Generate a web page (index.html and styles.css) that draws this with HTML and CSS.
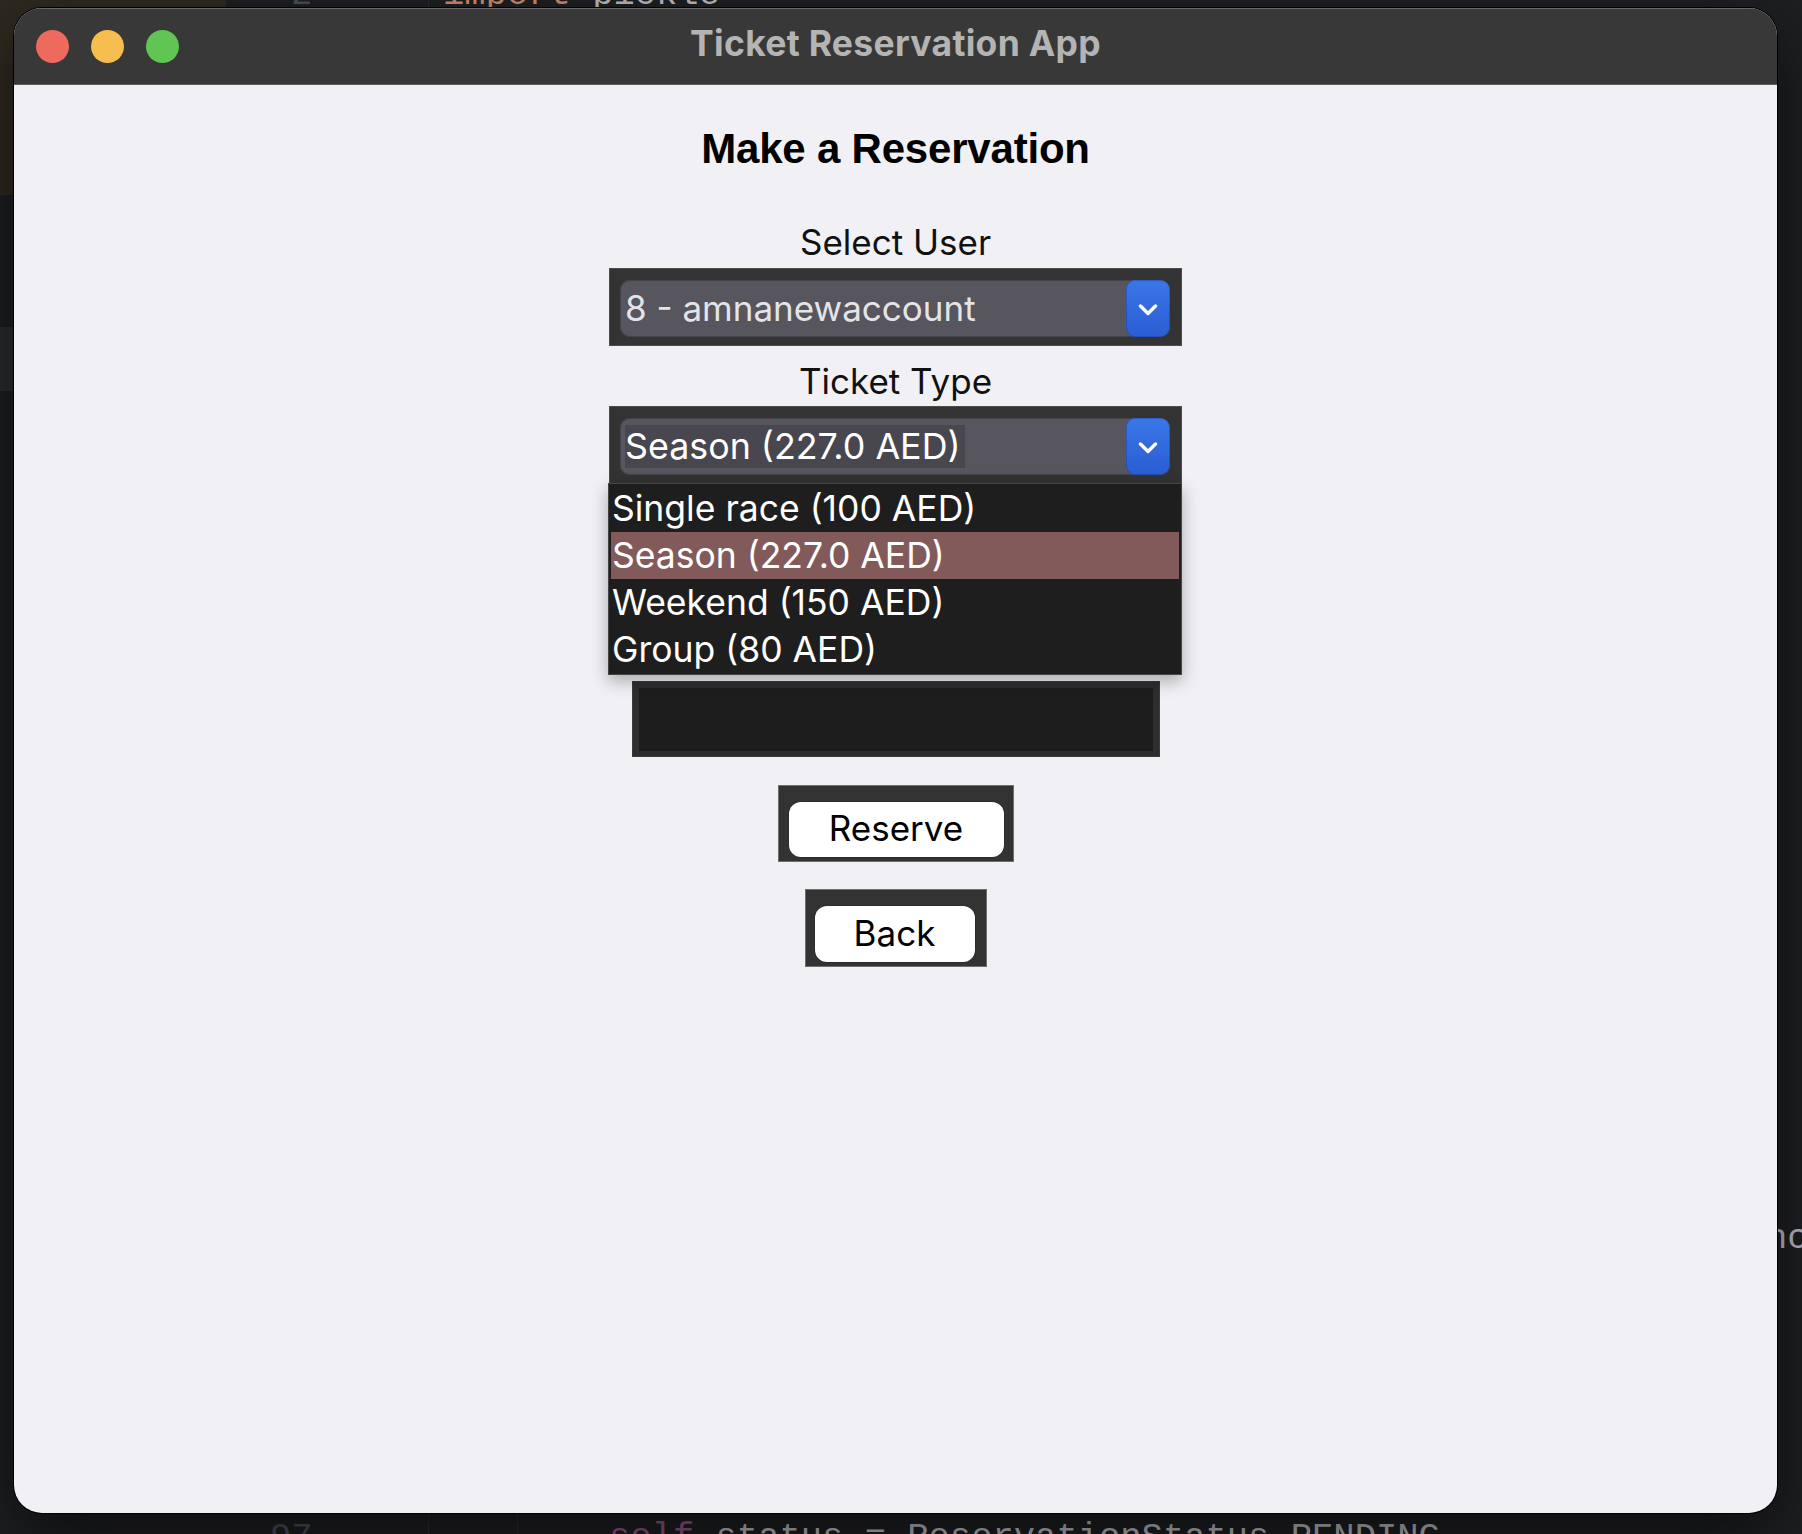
FILE: index.html
```html
<!DOCTYPE html>
<html lang="en">
<head>
<meta charset="utf-8">
<title>Ticket Reservation App</title>
<link rel="stylesheet" href="styles.css">
</head>
<body>
<div class="desktop">
  <div class="sidebar"></div>
  <div class="gutter-line gl1"></div>
  <div class="gutter-line gl2"></div>
  <div class="code code-top"><span class="ln">2</span><span class="kw">import</span> <span class="id">pickle</span></div>
  <div class="code code-right"><span class="id">nc</span></div>
  <div class="code code-bottom"><span class="ln">97</span><span class="self">self</span><span class="id">.status = ReservationStatus.PENDING</span></div>

  <div class="window">
    <header class="titlebar">
      <div class="lights">
        <span class="light red"></span>
        <span class="light yellow"></span>
        <span class="light green"></span>
      </div>
      <div class="title">Ticket Reservation App</div>
      <div></div>
    </header>

    <main class="content">
      <h1 class="heading">Make a Reservation</h1>

      <div class="label label-first">Select User</div>
      <div class="frame combo-frame frame-first">
        <div class="combo">
          <span class="combo-text">8 - amnanewaccount</span>
          <span class="combo-btn"><svg width="20" height="12" viewBox="0 0 20 12"><polyline points="2.5,2 10,9.5 17.5,2" fill="none" stroke="#fff" stroke-width="3.4" stroke-linecap="round" stroke-linejoin="round"/></svg></span>
        </div>
      </div>

      <div class="label label-second">Ticket Type</div>
      <div class="ticket-field">
        <div class="frame combo-frame">
          <div class="combo">
            <span class="combo-text"><span class="sel">Season (227.0 AED)</span></span>
            <span class="combo-btn"><svg width="20" height="12" viewBox="0 0 20 12"><polyline points="2.5,2 10,9.5 17.5,2" fill="none" stroke="#fff" stroke-width="3.4" stroke-linecap="round" stroke-linejoin="round"/></svg></span>
          </div>
        </div>
        <ul class="listbox">
          <li class="option">Single race (100 AED)</li>
          <li class="option selected">Season (227.0 AED)</li>
          <li class="option">Weekend (150 AED)</li>
          <li class="option">Group (80 AED)</li>
        </ul>
      </div>

      <div class="frame entry-frame"><div class="entry"></div></div>

      <div class="frame btn-frame reserve-frame"><button class="btn reserve">Reserve</button></div>
      <div class="frame btn-frame back-frame"><button class="btn back">Back</button></div>
    </main>
  </div>
</div>
</body>
</html>
```

FILE: styles.css
```css
* { box-sizing: border-box; }
html, body { margin: 0; padding: 0; }
body {
  width: 1802px;
  height: 1534px;
  overflow: hidden;
  background: #1e1f22;
}
.desktop {
  position: relative;
  width: 1802px;
  height: 1534px;
  overflow: hidden;
  background: #1e1f22;
}
.sidebar {
  position: absolute;
  left: 0; top: 0;
  width: 226px; height: 1534px;
  background: linear-gradient(to bottom, #2f2a20 0, #2f2a20 195px, #1e1f22 195px, #1e1f22 327px, #2b2d30 327px, #2b2d30 391px, #1e1f22 391px);
}
.gutter-line {
  position: absolute;
  top: 0; bottom: 0;
  width: 1px;
  background: #2b2d30;
}
.gl1 { left: 428px; }
.gl2 { left: 517px; }
.code {
  position: absolute;
  font-family: "Liberation Mono", "DejaVu Sans Mono", monospace;
  font-size: 35.5px;
  line-height: 40px;
  white-space: pre;
  color: #bcbec4;
}
.code .ln { color: #4b5059; display: inline-block; }
.code .kw { color: #cf8e6d; }
.code .self { color: #94558d; }
.code-top { top: -25px; left: 291px; }
.code-top .ln { width: 152px; }
.code-bottom { top: 1518px; left: 270px; }
.code-bottom .ln { width: 339px; }
.code-right { top: 1219px; left: 1766px; }

.window {
  position: absolute;
  left: 14px; top: 8px;
  width: 1763px; height: 1505px;
  border-radius: 28px;
  overflow: hidden;
  background: #f1f0f5;
  box-shadow: 0 0 0 1px #000, 0 24px 70px rgba(0,0,0,0.6);
  display: flex;
  flex-direction: column;
}
.titlebar {
  height: 77px;
  flex: none;
  background: #383838;
  border-bottom: 1px solid #5e5e5e;
  box-shadow: inset 0 1px 0 #686868;
  display: grid;
  grid-template-columns: 1fr auto 1fr;
  align-items: center;
  padding: 0 22px;
}
.lights { display: flex; gap: 22px; }
.light { width: 33px; height: 33px; border-radius: 50%; display: block; }
.red { background: #ee6a5f; }
.yellow { background: #f5be4f; }
.green { background: #61c554; }
.title {
  font-family: Inter, "Liberation Sans", sans-serif;
  font-weight: 700;
  font-size: 35.5px;
  color: #b4b4b4;
  letter-spacing: 0.3px;
  padding-bottom: 5px;
}

.content {
  flex: 1;
  display: flex;
  flex-direction: column;
  align-items: center;
}
.heading {
  margin: 40px 0 0;
  font-family: "Liberation Sans", Arial, sans-serif;
  font-weight: 700;
  font-size: 42px;
  line-height: 48px;
  letter-spacing: -0.2px;
  color: #000;
}
.label {
  font-family: Inter, "Liberation Sans", sans-serif;
  font-size: 35px;
  line-height: 40px;
  color: #111;
}
.label-first { margin-top: 49px; }
.label-second { margin-top: 15px; }

.frame {
  background: #333333;
  border: 1px solid #4c4c4c;
}
.combo-frame {
  width: 573px;
  height: 78px;
  padding: 11px 11px 8px 10px;
}
.frame-first { margin-top: 6px; }
.ticket-field { position: relative; margin-top: 5px; }

.combo {
  height: 57px;
  border-radius: 10px;
  background: #57555d;
  box-shadow: inset 0 0 0 1px #46444b;
  display: flex;
  align-items: center;
  overflow: hidden;
}
.combo-text {
  flex: 1;
  padding-left: 5px;
  font-family: Inter, "Liberation Sans", sans-serif;
  font-size: 35px;
  line-height: 43px;
  color: #e4e4e6;
  white-space: nowrap;
}
.sel {
  display: inline-block;
  background: #48464e;
  color: #fff;
  padding-right: 4px;
  font-size: 35.8px;
}
.combo-btn {
  flex: none;
  width: 44px;
  height: 57px;
  border-radius: 9px;
  background: linear-gradient(to bottom, #3b77e9, #2a5dd2);
  box-shadow: inset 0 0 0 1px rgba(20,50,130,0.35);
  display: flex;
  align-items: center;
  justify-content: center;
}
.combo-btn svg { display: block; margin-top: 2px; }

.listbox {
  position: absolute;
  left: -1px;
  top: 77px;
  width: 574px;
  margin: 0;
  padding: 1px 2px;
  list-style: none;
  background: #1e1e1e;
  border: 1px solid #454545;
  box-shadow: 0 6px 16px rgba(0,0,0,0.3);
  z-index: 5;
}
.option {
  height: 47px;
  padding-left: 1px;
  font-family: Inter, "Liberation Sans", sans-serif;
  font-size: 35.5px;
  line-height: 47px;
  color: #fff;
  white-space: nowrap;
}
.option.selected { background: #835a5a; }

.entry-frame {
  margin-top: 197px;
  width: 528px;
  height: 76px;
  padding: 6px 6px 5px;
  background: #2e2e2e;
  border-color: #3a3a3a;
}
.entry { height: 100%; background: #1d1d1d; }

.btn-frame { border-color: #6e6e6e; }
.reserve-frame {
  margin-top: 28px;
  width: 236px;
  height: 77px;
  padding: 16px 9px 4px 10px;
}
.back-frame {
  margin-top: 27px;
  width: 182px;
  height: 78px;
  padding: 16px 11px 4px 9px;
}
.btn {
  display: block;
  width: 100%;
  height: 100%;
  margin: 0;
  padding: 0 0 3px;
  border: none;
  border-radius: 12px;
  background: #fff;
  box-shadow: 0 0 0 1px rgba(0,0,0,0.12);
  font-family: Inter, "Liberation Sans", sans-serif;
  font-size: 35px;
  color: #000;
  text-align: center;
}
```
